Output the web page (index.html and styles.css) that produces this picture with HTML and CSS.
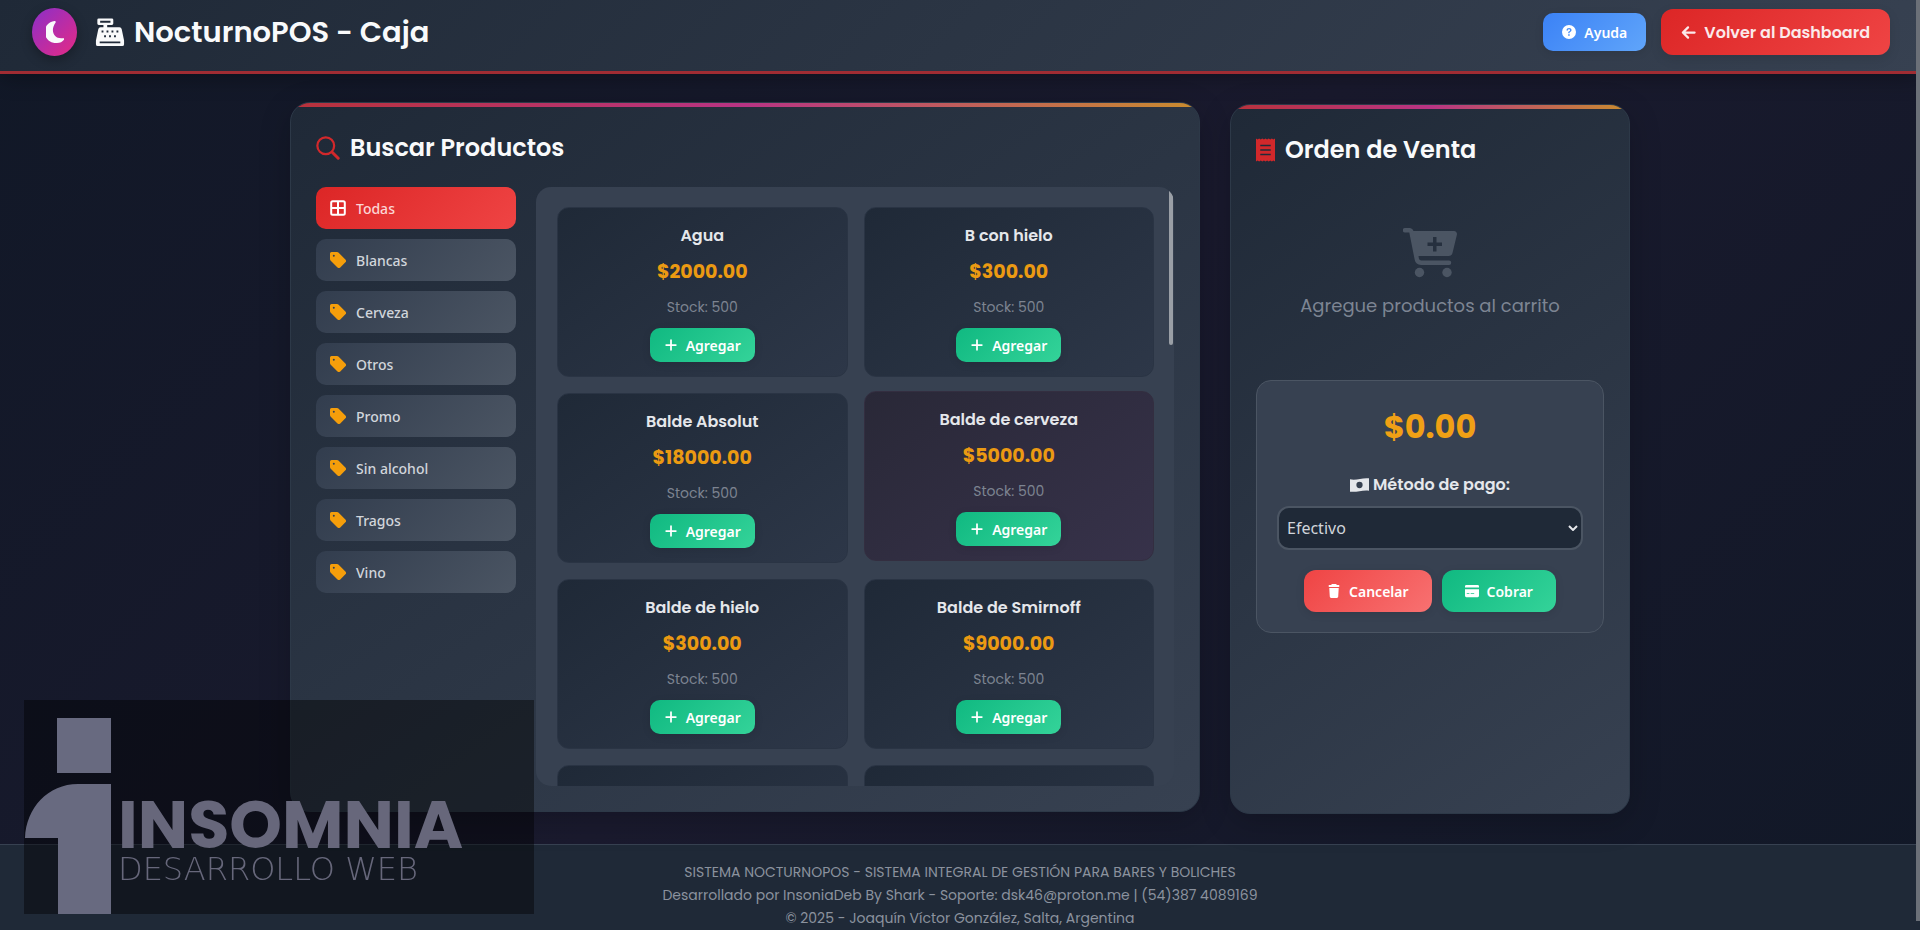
FILE: index.html
```html
<!DOCTYPE html>
<html lang="es">

<head>
  <meta charset="UTF-8" />
  <meta name="viewport" content="width=device-width, initial-scale=1.0" />
  <title>NocturnoPOS - Caja</title>
  <link rel="stylesheet" href="styles.css">
</head>

<body>
  <!-- Iconos -->
  <svg class="sprite" aria-hidden="true">
    <symbol id="i-moon" viewBox="0 0 18 22">
      <path d="M8.500 0A11 11 0 0 0 11 22c3 0 5.500-1.300 7-3.300a1 1 0 0 0-1.200-1.500C8.500 18.500 3.500 10 9.600 1.500A1 1 0 0 0 8.500 0z" />
    </symbol>
    <symbol id="i-register" viewBox="0 0 32 32">
      <path fill-rule="evenodd" d="M4 1.500h14a1.500 1.500 0 0 1 1.500 1.500v4a1.500 1.500 0 0 1-1.500 1.500h-5V11h13a2.500 2.500 0 0 1 2.500 2L31 25v4a2 2 0 0 1-2 2H3a2 2 0 0 1-2-2v-4l2.500-12A2.500 2.500 0 0 1 6 11h3V8.500H4A1.500 1.500 0 0 1 2.500 7V3A1.500 1.500 0 0 1 4 1.500zM5.500 4v2h11V4zM7 14.500v2h2v-2zm5.300 0v2h2v-2zm5.300 0v2h2v-2zm5.300 0v2h2v-2zM9.700 19.500v2h2v-2zm5.300 0v2h2v-2zm5.300 0v2h2v-2zM5 26v2h22v-2z" />
    </symbol>
    <symbol id="i-help" viewBox="0 0 16 16">
      <path fill-rule="evenodd" d="M16 8A8 8 0 1 1 0 8a8 8 0 0 1 16 0zM5.200 6.200h1.600c0-.9.500-1.300 1.200-1.300s1.200.4 1.200 1c0 .6-.3.900-1 1.300-.8.500-1.100 1-1.100 1.900v.3h1.600V9c0-.5.200-.7 1-1.200.7-.4 1.200-1 1.200-2 0-1.400-1.200-2.300-2.800-2.300-1.700 0-2.900.9-2.900 2.700zM7 10.600v1.700h1.800v-1.700z" />
    </symbol>
    <symbol id="i-arrow" viewBox="0 0 16 16">
      <path d="M14.500 8h-12M7.500 2.500 2 8l5.500 5.500" fill="none" stroke="currentColor" stroke-width="2.400" stroke-linecap="round" stroke-linejoin="round" />
    </symbol>
    <symbol id="i-search" viewBox="0 0 16 16">
      <circle cx="6.500" cy="6.500" r="5.600" fill="none" stroke="currentColor" stroke-width="1.500" />
      <path d="M10.800 10.800l4 4" stroke="currentColor" stroke-width="2" stroke-linecap="round" />
    </symbol>
    <symbol id="i-grid" viewBox="0 0 16 16">
      <rect x="1.200" y="1.200" width="13.600" height="13.600" rx="1.500" fill="none" stroke="currentColor" stroke-width="2" />
      <path d="M8 1v14M1 8h14" stroke="currentColor" stroke-width="2" />
    </symbol>
    <symbol id="i-tag" viewBox="0 0 16 16">
      <path fill-rule="evenodd" d="M0 1.500A1.500 1.500 0 0 1 1.500 0h5.600a2 2 0 0 1 1.300.5l7 7a2 2 0 0 1 0 2.800l-5.100 5.100a2 2 0 0 1-2.800 0l-7-7A2 2 0 0 1 0 7.100zm3.800 3.300a1 1 0 1 0 0-2 1 1 0 0 0 0 2z" />
    </symbol>
    <symbol id="i-plus" viewBox="0 0 16 16">
      <path d="M8 2.500v11M2.500 8h11" stroke="currentColor" stroke-width="2" stroke-linecap="round" />
    </symbol>
    <symbol id="i-receipt" viewBox="0 0 20 24">
      <path fill-rule="evenodd" d="M0 0l1.700 1L3.300 0 5 1 6.700 0l1.600 1L10 0l1.700 1L13.300 0 15 1 16.700 0l1.600 1L20 0v24l-1.700-1-1.600 1-1.700-1-1.700 1-1.600-1L10 24l-1.700-1L6.700 24 5 23 3.300 24l-1.600-1L0 24zM4.500 6.500V8h11V6.500zm0 4.700v1.500h11v-1.500zm0 4.700v1.500h11v-1.500z" />
    </symbol>
    <symbol id="i-cart" viewBox="0 0 54 50">
      <path fill-rule="evenodd" d="M2 0h5a4 4 0 0 1 3.500 3H51a3 3 0 0 1 2.900 3.700L49.500 25a4 4 0 0 1-4 3H15.500l.4 2.500a2.500 2.500 0 0 0 2.500 2H46a2 2 0 0 1 0 4.500H18a6.500 6.500 0 0 1-6.300-5.200L6.300 4.500H2A2 2 0 0 1 2 0zm28 9v5.500h-5.500v3.500H30v5.500h3.500V18H39v-3.500h-5.500V9z" />
      <circle cx="16.500" cy="44.500" r="4.700" />
      <circle cx="44" cy="44.500" r="4.700" />
    </symbol>
    <symbol id="i-cash" viewBox="0 0 20 16">
      <path fill-rule="evenodd" d="M0 2C7 3.500 13 0 20 1v13C13 13 7 16 0 15zM10 4.700A3.300 3.300 0 1 0 10 11.300 3.300 3.300 0 0 0 10 4.700z" />
    </symbol>
    <symbol id="i-trash" viewBox="0 0 16 16">
      <path d="M5.500 0h5l.7 1H14v2.500H2V1h2.800zM2.600 4.700h10.800l-.6 10a1.500 1.500 0 0 1-1.500 1.300H4.700a1.500 1.500 0 0 1-1.500-1.300z" />
    </symbol>
    <symbol id="i-card" viewBox="0 0 16 14">
      <path fill-rule="evenodd" d="M1.500 0h13A1.500 1.500 0 0 1 16 1.500V3H0V1.500A1.500 1.500 0 0 1 1.500 0zM0 5h16v7.500a1.500 1.500 0 0 1-1.500 1.500h-13A1.500 1.500 0 0 1 0 12.500zm2 4.500v1h3v-1zm4.500 0v1h4v-1z" />
    </symbol>
  </svg>

  <header class="header">
    <div class="brand">
      <div class="logo"><svg class="icon"><use href="#i-moon" /></svg></div>
      <h1 class="brand-title"><svg class="icon"><use href="#i-register" /></svg>NocturnoPOS - Caja</h1>
    </div>
    <div class="header-actions">
      <button type="button" class="btn btn-help"><svg class="icon"><use href="#i-help" /></svg>Ayuda</button>
      <a href="#" class="btn-back"><svg class="icon"><use href="#i-arrow" /></svg>Volver al Dashboard</a>
    </div>
  </header>

  <main class="container">
    <section class="panel panel-hover">
      <h2 class="panel-title"><svg class="icon"><use href="#i-search" /></svg>Buscar Productos</h2>
      <div class="browser">
        <nav class="categories">
          <button type="button" class="category active"><svg class="icon"><use href="#i-grid" /></svg>Todas</button>
          <button type="button" class="category"><svg class="icon"><use href="#i-tag" /></svg>Blancas</button>
          <button type="button" class="category"><svg class="icon"><use href="#i-tag" /></svg>Cerveza</button>
          <button type="button" class="category"><svg class="icon"><use href="#i-tag" /></svg>Otros</button>
          <button type="button" class="category"><svg class="icon"><use href="#i-tag" /></svg>Promo</button>
          <button type="button" class="category"><svg class="icon"><use href="#i-tag" /></svg>Sin alcohol</button>
          <button type="button" class="category"><svg class="icon"><use href="#i-tag" /></svg>Tragos</button>
          <button type="button" class="category"><svg class="icon"><use href="#i-tag" /></svg>Vino</button>
        </nav>
        <div class="products">
          <div class="product-grid">
            <article class="product">
              <h3 class="product-name">Agua</h3>
              <p class="product-price">$2000.00</p>
              <p class="product-stock">Stock: 500</p>
              <button type="button" class="btn btn-add"><svg class="icon"><use href="#i-plus" /></svg>Agregar</button>
            </article>
            <article class="product">
              <h3 class="product-name">B con hielo</h3>
              <p class="product-price">$300.00</p>
              <p class="product-stock">Stock: 500</p>
              <button type="button" class="btn btn-add"><svg class="icon"><use href="#i-plus" /></svg>Agregar</button>
            </article>
            <article class="product">
              <h3 class="product-name">Balde Absolut</h3>
              <p class="product-price">$18000.00</p>
              <p class="product-stock">Stock: 500</p>
              <button type="button" class="btn btn-add"><svg class="icon"><use href="#i-plus" /></svg>Agregar</button>
            </article>
            <article class="product product-hover">
              <h3 class="product-name">Balde de cerveza</h3>
              <p class="product-price">$5000.00</p>
              <p class="product-stock">Stock: 500</p>
              <button type="button" class="btn btn-add"><svg class="icon"><use href="#i-plus" /></svg>Agregar</button>
            </article>
            <article class="product">
              <h3 class="product-name">Balde de hielo</h3>
              <p class="product-price">$300.00</p>
              <p class="product-stock">Stock: 500</p>
              <button type="button" class="btn btn-add"><svg class="icon"><use href="#i-plus" /></svg>Agregar</button>
            </article>
            <article class="product">
              <h3 class="product-name">Balde de Smirnoff</h3>
              <p class="product-price">$9000.00</p>
              <p class="product-stock">Stock: 500</p>
              <button type="button" class="btn btn-add"><svg class="icon"><use href="#i-plus" /></svg>Agregar</button>
            </article>
            <article class="product"></article>
            <article class="product"></article>
          </div>
        </div>
      </div>
    </section>

    <section class="panel">
      <h2 class="panel-title"><svg class="icon icon-receipt"><use href="#i-receipt" /></svg>Orden de Venta</h2>
      <div class="cart-empty">
        <svg class="icon"><use href="#i-cart" /></svg>
        <p>Agregue productos al carrito</p>
      </div>
      <div class="checkout">
        <div class="total">$0.00</div>
        <label class="pay-label" for="metodo"><svg class="icon"><use href="#i-cash" /></svg>Método de pago:</label>
        <div class="select-wrap">
          <select id="metodo" class="pay-select">
            <option>Efectivo</option>
          </select>
          <svg class="chevron" viewBox="0 0 10 6"><path d="M1 1l4 4 4-4" /></svg>
        </div>
        <div class="checkout-actions">
          <button type="button" class="btn btn-cancel"><svg class="icon"><use href="#i-trash" /></svg>Cancelar</button>
          <button type="button" class="btn btn-pay"><svg class="icon"><use href="#i-card" /></svg>Cobrar</button>
        </div>
      </div>
    </section>
  </main>

  <footer class="footer">
    <p>SISTEMA NOCTURNOPOS - SISTEMA INTEGRAL DE GESTIÓN PARA BARES Y BOLICHES</p>
    <p>Desarrollado por InsoniaDeb By Shark - Soporte: dsk46@proton.me | (54)387 4089169</p>
    <p>© 2025 - Joaquín Víctor González, Salta, Argentina</p>
  </footer>

  <!-- Marca de agua -->
  <div class="watermark">
    <svg class="watermark-mark" viewBox="0 0 88 214">
      <path d="M33 18h54v55H33zM87 84v130H34v-76H1C2 108 24 84 54 84z" />
    </svg>
    <div class="watermark-text">
      <span class="watermark-name">INSOMNIA</span>
      <span class="watermark-sub">DESARROLLO WEB</span>
    </div>
  </div>
  <div class="page-scroll"></div>
</body>

</html>
```
FILE: styles.css
```css
* {
  margin: 0;
  padding: 0;
  box-sizing: border-box;
}

body {
  height: 100vh;
  overflow: hidden;
  display: flex;
  flex-direction: column;
  font-family: Poppins, Inter, sans-serif;
  color: #f9fafb;
  background: linear-gradient(135deg, #111827 0%, #1a1a2e 50%, #111827 100%);
}

button,
select {
  font-family: "Noto Sans", sans-serif;
}

.sprite {
  display: none;
}

.icon {
  width: 16px;
  height: 16px;
  fill: currentColor;
  flex-shrink: 0;
}

/* Encabezado */
.header {
  display: flex;
  justify-content: space-between;
  align-items: center;
  padding: 8px 30px 15px 32px;
  border-bottom: 3px solid #a02c33;
  background: linear-gradient(135deg, #1f2937, #374151);
  box-shadow: 0 4px 20px rgba(0, 0, 0, 0.3);
}

.brand {
  display: flex;
  align-items: center;
  gap: 18px;
}

.logo {
  width: 45px;
  height: 48px;
  border-radius: 50%;
  display: flex;
  align-items: center;
  justify-content: center;
  background: linear-gradient(135deg, #8b2fc9, #e62a84);
  box-shadow: 0 4px 12px rgba(0, 0, 0, 0.3);
}

.logo .icon {
  width: 18px;
  height: 22px;
}

.brand-title {
  display: flex;
  align-items: center;
  gap: 9px;
  font-size: 29px;
  font-weight: 600;
  line-height: 44px;
}

.brand-title .icon {
  width: 30px;
  height: 30px;
}

.header-actions {
  display: flex;
  align-items: center;
  gap: 15px;
}

.btn {
  display: inline-flex;
  align-items: center;
  justify-content: center;
  gap: 8px;
  border: none;
  border-radius: 10px;
  color: #fff;
  font-size: 14px;
  font-weight: 600;
  box-shadow: 0 2px 8px rgba(0, 0, 0, 0.1);
}

.btn .icon {
  width: 14px;
  height: 14px;
}

.btn-help {
  padding: 0 19px;
  height: 38px;
  background: linear-gradient(135deg, #3b82f6, #60a5fa);
}

.btn-back {
  display: flex;
  align-items: center;
  gap: 8px;
  height: 46px;
  padding: 0 20px;
  border-radius: 12px;
  background: linear-gradient(135deg, #dc2626, #ef4444);
  color: #fbe9ea;
  font-size: 16px;
  font-weight: 600;
  text-decoration: none;
  box-shadow: 0 4px 12px rgba(0, 0, 0, 0.1);
}

.btn-back .icon {
  width: 15px;
  height: 15px;
}

/* Contenido */
.container {
  width: 100%;
  max-width: 1400px;
  margin: 0 auto;
  padding: 30px;
  display: grid;
  grid-template-columns: 1fr 400px;
  gap: 30px;
}

.panel {
  position: relative;
  overflow: hidden;
  padding: 25px;
  border: 1px solid #2d3948;
  border-radius: 20px;
  background: linear-gradient(145deg, #1f2937, #374151);
  box-shadow: 0 8px 32px rgba(0, 0, 0, 0.2);
}

.panel::before {
  content: "";
  position: absolute;
  top: 0;
  left: 0;
  right: 0;
  height: 4px;
  background: linear-gradient(90deg, #b8323b, #b83484, #c98c2e);
}

.panel-hover {
  transform: translateY(-2px);
}

.panel-title {
  display: flex;
  align-items: center;
  gap: 10px;
  margin-bottom: 19px;
  font-size: 24px;
  font-weight: 600;
  line-height: 40px;
}

.panel-title .icon {
  width: 24px;
  height: 24px;
  color: #d2282b;
}

.panel-title .icon-receipt {
  width: 19px;
}

.browser {
  display: grid;
  grid-template-columns: 200px 1fr;
  gap: 20px;
}

.categories {
  display: flex;
  flex-direction: column;
  gap: 10px;
}

.category {
  display: flex;
  align-items: center;
  gap: 10px;
  height: 42px;
  padding: 0 14px;
  border: none;
  border-radius: 10px;
  background: linear-gradient(135deg, #323d4e, #4b5563);
  color: #d1d5db;
  font-size: 14px;
  font-weight: 500;
}

.category .icon {
  color: #f59e0b;
}

.category.active {
  background: linear-gradient(135deg, #dc2626, #ef4444);
  color: #fbd5d5;
}

.category.active .icon {
  color: #fff;
}

.products {
  position: relative;
  max-height: 599px;
  overflow: hidden;
  padding: 20px 20px 20px 21px;
  border-radius: 15px;
  background: #374151;
}

/* Barra de desplazamiento */
.products::after {
  content: "";
  position: absolute;
  top: 2px;
  right: 1px;
  width: 4px;
  height: 156px;
  border-radius: 2px;
  background: #9a9fa6;
}

.product-grid {
  display: grid;
  grid-template-columns: 1fr 1fr;
  grid-auto-rows: 1fr;
  gap: 16px;
}

.product {
  padding: 16px 15px 14px;
  border: 1px solid #2a3444;
  border-radius: 12px;
  background: linear-gradient(145deg, #1f2937, #2d3748);
  text-align: center;
}

.product-hover {
  transform: translateY(-2px);
  border-color: #332e40;
  background: linear-gradient(145deg, #292837, #37324a);
}

.product-name {
  margin-bottom: 8px;
  font-size: 16px;
  font-weight: 600;
  line-height: 24px;
  color: #e5e7eb;
}

.product-price {
  margin-bottom: 8px;
  font-size: 19px;
  font-weight: 700;
  line-height: 32px;
  color: #eb9a12;
}

.product-stock {
  margin-bottom: 10px;
  font-size: 14px;
  line-height: 22px;
  color: #7d8491;
}

.btn-add {
  height: 34px;
  padding: 0 14px;
  background: linear-gradient(135deg, #10b981, #34d399);
}

/* Orden de venta */
.cart-empty {
  display: flex;
  flex-direction: column;
  align-items: center;
  gap: 13px;
  padding: 39px 20px 60px;
  color: #7d8593;
  font-size: 18px;
  line-height: 29px;
}

.cart-empty .icon {
  width: 54px;
  height: 50px;
  color: #4b5563;
}

.checkout {
  padding: 20px;
  border: 1px solid #4b5563;
  border-radius: 15px;
  background: #374151;
  text-align: center;
}

.total {
  margin-bottom: 20px;
  font-size: 32px;
  font-weight: 700;
  line-height: 51px;
  color: #f0a015;
}

.pay-label {
  display: flex;
  align-items: center;
  justify-content: center;
  gap: 4px;
  margin-bottom: 8px;
  font-size: 16px;
  font-weight: 600;
  line-height: 26px;
  color: #e5e7eb;
}

.pay-label .icon {
  width: 19px;
}

.select-wrap {
  position: relative;
  margin-bottom: 20px;
}

.pay-select {
  display: block;
  width: 100%;
  height: 44px;
  padding: 0 8px;
  appearance: none;
  border: 2px solid #4b5563;
  border-radius: 12px;
  background: #1f2937;
  color: #d1d5db;
  font-size: 16px;
}

.chevron {
  position: absolute;
  top: 19px;
  right: 5px;
  width: 10px;
  height: 6px;
  fill: none;
  stroke: #e5e7eb;
  stroke-width: 2;
}

.checkout-actions {
  display: flex;
  justify-content: center;
  gap: 10px;
}

.checkout-actions .btn {
  height: 42px;
  padding: 0 23px;
  border-radius: 12px;
}

.btn-cancel {
  background: linear-gradient(135deg, #ef4444, #f87171);
}

.btn-pay {
  background: linear-gradient(135deg, #10b981, #34d399);
}

/* Pie */
.footer {
  flex: 1 0 auto;
  padding-top: 16px;
  border-top: 1px solid #374151;
  background: #1f2937;
  color: #8b929e;
  font-size: 14px;
  line-height: 23px;
  text-align: center;
}

.watermark {
  position: fixed;
  left: 24px;
  bottom: 16px;
  width: 510px;
  height: 214px;
  display: flex;
  gap: 6px;
  background: rgba(0, 0, 0, 0.42);
  color: #67677b;
  pointer-events: none;
}

.watermark-mark {
  width: 88px;
  height: 214px;
  fill: #686a80;
}

.watermark-text {
  display: flex;
  flex-direction: column;
  padding-top: 96px;
}

.watermark-name {
  font-size: 67px;
  font-weight: 700;
  line-height: 58px;
}

.watermark-sub {
  font-family: "DejaVu Sans", sans-serif;
  font-size: 32px;
  font-weight: 200;
  line-height: 30px;
}

.page-scroll {
  position: fixed;
  top: 0;
  right: 0;
  width: 4px;
  height: 99%;
  background: #6b7078;
}
```
